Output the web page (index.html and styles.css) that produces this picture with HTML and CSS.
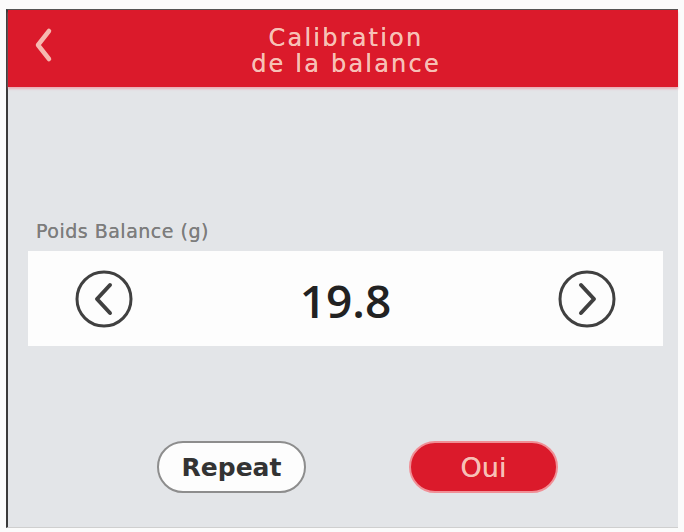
FILE: index.html
```html
<!DOCTYPE html>
<html lang="fr">
<head>
<meta charset="utf-8">
<title>Calibration de la balance</title>
<link rel="stylesheet" href="styles.css">
</head>
<body>
<div class="screen">
  <header class="header">
    <span class="back">
      <svg width="22" height="38" viewBox="0 0 22 38"><path d="M17 5 L6 19 L17 33" fill="none" stroke="#f6b9b0" stroke-width="4.5" stroke-linecap="round" stroke-linejoin="round"/></svg>
    </span>
    <h1 class="title">Calibration<br>de la balance</h1>
  </header>
  <main class="main">
    <div class="label">Poids Balance (g)</div>
    <div class="stepper">
      <span class="step">
        <svg width="60" height="60" viewBox="0 0 60 60"><circle cx="30" cy="30" r="27" fill="none" stroke="#404040" stroke-width="3"/><path d="M36 16 L23 30 L36 44" fill="none" stroke="#404040" stroke-width="4" stroke-linecap="round" stroke-linejoin="round"/></svg>
      </span>
      <span class="value">19.8</span>
      <span class="step">
        <svg width="60" height="60" viewBox="0 0 60 60"><circle cx="30" cy="30" r="27" fill="none" stroke="#404040" stroke-width="3"/><path d="M24 16 L37 30 L24 44" fill="none" stroke="#404040" stroke-width="4" stroke-linecap="round" stroke-linejoin="round"/></svg>
      </span>
    </div>
    <div class="actions">
      <button class="btn btn-outline">Repeat</button>
      <button class="btn btn-red">Oui</button>
    </div>
  </main>
</div>
</body>
</html>
```
FILE: styles.css
```css
html, body {
  margin: 0;
  padding: 0;
  background: #fbfbfb;
}
body {
  width: 684px;
  height: 532px;
  overflow: hidden;
  font-family: "DejaVu Sans", "Liberation Sans", sans-serif;
}
.screen {
  margin: 9px 0 0 6px;
  width: 670px;
  height: 517px;
  border-left: 2px solid #3a3a3a;
  border-top: 1px solid #555;
  border-bottom: 1px solid #cfcfcf;
  background: #e3e5e8;
  display: flex;
  flex-direction: column;
}
.header {
  height: 77px;
  background: #db1a2b;
  box-shadow: 0 2px 2px rgba(240, 150, 160, 0.7);
  display: flex;
  align-items: center;
  justify-content: center;
  position: relative;
}
.back {
  position: absolute;
  left: 24px;
  top: 16px;
  display: block;
}
.back svg { display: block; }
.title {
  margin: 5px 0 0 6px;
  font-weight: normal;
  font-size: 24px;
  line-height: 26px;
  letter-spacing: 2.2px;
  color: #f7c0b6;
  text-align: center;
  text-shadow: 0 0 0.6px #f7c0b6;
}
.main {
  flex: 1;
  display: flex;
  flex-direction: column;
}
.label {
  margin: 133px 0 0 28px;
  height: 22px;
  font-size: 19px;
  line-height: 22px;
  letter-spacing: 0.5px;
  color: #7d7d7d;
  text-shadow: 0 0 0.5px #7d7d7d;
}
.stepper {
  margin: 9px 0 0 20px;
  width: 635px;
  height: 95px;
  background: #fdfdfd;
  display: flex;
  align-items: center;
  justify-content: space-between;
  padding: 0 46px 0 46px;
  box-sizing: border-box;
}
.step { display: block; height: 60px; }
.step svg { display: block; }
.value {
  font-family: "Open Sans", "DejaVu Sans", sans-serif;
  font-weight: 600;
  font-size: 46px;
  line-height: 60px;
  color: #222;
  margin-top: 2px;
}
.actions {
  margin: 95px 0 0 149px;
  display: flex;
  gap: 103px;
}
.btn {
  height: 52px;
  width: 149px;
  border-radius: 26px;
  font-family: "DejaVu Sans", "Liberation Sans", sans-serif;
  padding: 0;
  box-sizing: border-box;
}
.btn-outline {
  background: #fdfdfd;
  border: 2px solid #8d8d8d;
  color: #333;
  font-weight: bold;
  font-size: 25px;
}
.btn-red {
  background: #db1a2b;
  border: 2px solid #f08f96;
  color: #f7c0b6;
  font-size: 27px;
  text-shadow: 0 0 0.6px #f7c0b6;
}
```
